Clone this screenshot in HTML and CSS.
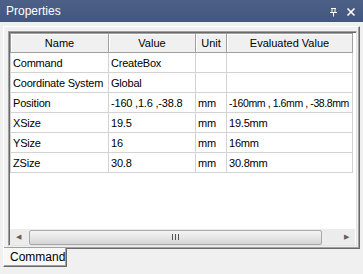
FILE: index.html
```html
<!DOCTYPE html>
<html lang="en">

<head>
  <meta charset="UTF-8">
  <title>Properties</title>
  <link rel="stylesheet" href="styles.css">
</head>

<body>
  <div class="panel">
    <header class="panel__title">
      <span>Properties</span>
      <div class="panel__buttons">
        <svg width="10" height="10" viewBox="0 0 10 10">
          <path d="M3 1.5h5M4 1.5v4M7 1.5v4M2 5.5h7M5.5 5.5v4" stroke="#fff" stroke-width="1" fill="none" />
        </svg>
        <svg width="10" height="10" viewBox="0 0 10 10">
          <path d="M1.5 1.5l7 7M8.5 1.5l-7 7" stroke="#fff" stroke-width="1.6" fill="none" />
        </svg>
      </div>
    </header>

    <div class="panel__body">
      <div class="page">
        <div class="grid">
          <table class="grid__table">
            <thead>
              <tr>
                <th class="col-name">Name</th>
                <th class="col-value">Value</th>
                <th class="col-unit">Unit</th>
                <th class="col-eval">Evaluated Value</th>
              </tr>
            </thead>
            <tbody>
              <tr><td>Command</td><td>CreateBox</td><td></td><td></td></tr>
              <tr><td>Coordinate System</td><td>Global</td><td></td><td></td></tr>
              <tr><td>Position</td><td>-160 ,1.6 ,-38.8</td><td>mm</td><td class="tight">-160mm , 1.6mm , -38.8mm</td></tr>
              <tr><td>XSize</td><td>19.5</td><td>mm</td><td>19.5mm</td></tr>
              <tr><td>YSize</td><td>16</td><td>mm</td><td>16mm</td></tr>
              <tr><td>ZSize</td><td>30.8</td><td>mm</td><td>30.8mm</td></tr>
            </tbody>
          </table>
          <div class="grid__space"></div>
          <div class="scrollbar">
            <span class="scrollbar__arrow">&#9664;</span>
            <div class="scrollbar__thumb"><span class="scrollbar__grip"></span></div>
            <span class="scrollbar__arrow">&#9654;</span>
          </div>
        </div>
      </div>
      <div class="tabs">
        <div class="tabs__item">Command</div>
      </div>
    </div>
  </div>
</body>

</html>
```

FILE: styles.css
```css
html,
body {
  margin: 0;
  height: 100%;
}

body {
  background: #f0f0f0;
  font-family: "Liberation Sans", Arial, sans-serif;
  font-size: 11px;
  color: #000;
}

.panel {
  width: 363px;
  height: 274px;
  display: flex;
  flex-direction: column;
}

.panel__title {
  height: 22px;
  flex: none;
  display: flex;
  align-items: center;
  justify-content: space-between;
  padding: 0 7px 0 6px;
  background: linear-gradient(#4d6088, #43567d);
  color: #fff;
  font-size: 12px;
}

.panel__buttons {
  display: flex;
  gap: 8px;
  margin-top: 2px;
}

.panel__body {
  flex: 1;
  padding: 4px 3px 0 3px;
  display: flex;
  flex-direction: column;
}

.page {
  height: 223px;
  box-sizing: border-box;
  padding: 4px 2px 2px 4px;
  border: 1px solid #fff;
  border-right-color: #696969;
  border-bottom-color: #696969;
  box-shadow: inset -1px -1px 0 #a0a0a0;
}

.grid {
  height: 100%;
  box-sizing: border-box;
  display: flex;
  flex-direction: column;
  background: #fff;
  border: 1px solid #a0a0a0;
  border-right-color: #e3e3e3;
  border-bottom-color: #e3e3e3;
  box-shadow: inset 1px 1px 0 #696969;
  padding: 1px 1px 0 1px;
}

.grid__table {
  border-collapse: collapse;
  table-layout: fixed;
  width: 343px;
}

.grid__table th {
  height: 18px;
  padding: 0;
  font-weight: normal;
  text-align: center;
  background: #f0f0f0;
  border: 1px solid #a0a0a0;
  box-shadow: inset 1px 1px 0 #fff;
}

.grid__table td {
  height: 19px;
  padding: 0 0 0 2px;
  white-space: nowrap;
  overflow: hidden;
  letter-spacing: -0.2px;
  border: 1px solid #d3d3d3;
}

.grid__table td.tight {
  font-size: 10.5px;
  letter-spacing: -0.4px;
}

.col-name {
  width: 97px;
}

.col-value {
  width: 86px;
}

.col-unit {
  width: 30px;
}

.grid__space {
  flex: 1;
}

.scrollbar {
  height: 16px;
  display: flex;
  align-items: center;
  background: #ececec;
  color: #606060;
  font-size: 7px;
}

.scrollbar__arrow {
  width: 17px;
  text-align: center;
}

.scrollbar__thumb {
  flex: 1;
  height: 15px;
  margin: 0 16px 0 2px;
  display: flex;
  align-items: center;
  justify-content: center;
  border: 1px solid #a8a8a8;
  border-radius: 2px;
  background: linear-gradient(#f4f4f4, #e6e6e6 50%, #d4d4d4);
  box-sizing: border-box;
}

.scrollbar__grip {
  width: 7px;
  height: 6px;
  background: repeating-linear-gradient(90deg, #555 0 1px, transparent 1px 3px);
}

.tabs {
  display: flex;
}

.tabs__item {
  width: 56px;
  height: 18px;
  padding: 0 0 0 6px;
  margin-top: -1px;
  background: #f8f8f8;
  border: 1px solid #fff;
  border-top: none;
  border-right-color: #696969;
  border-bottom-color: #696969;
  box-shadow: inset -1px -1px 0 #a0a0a0;
  font-size: 12px;
  line-height: 19px;
}
```
